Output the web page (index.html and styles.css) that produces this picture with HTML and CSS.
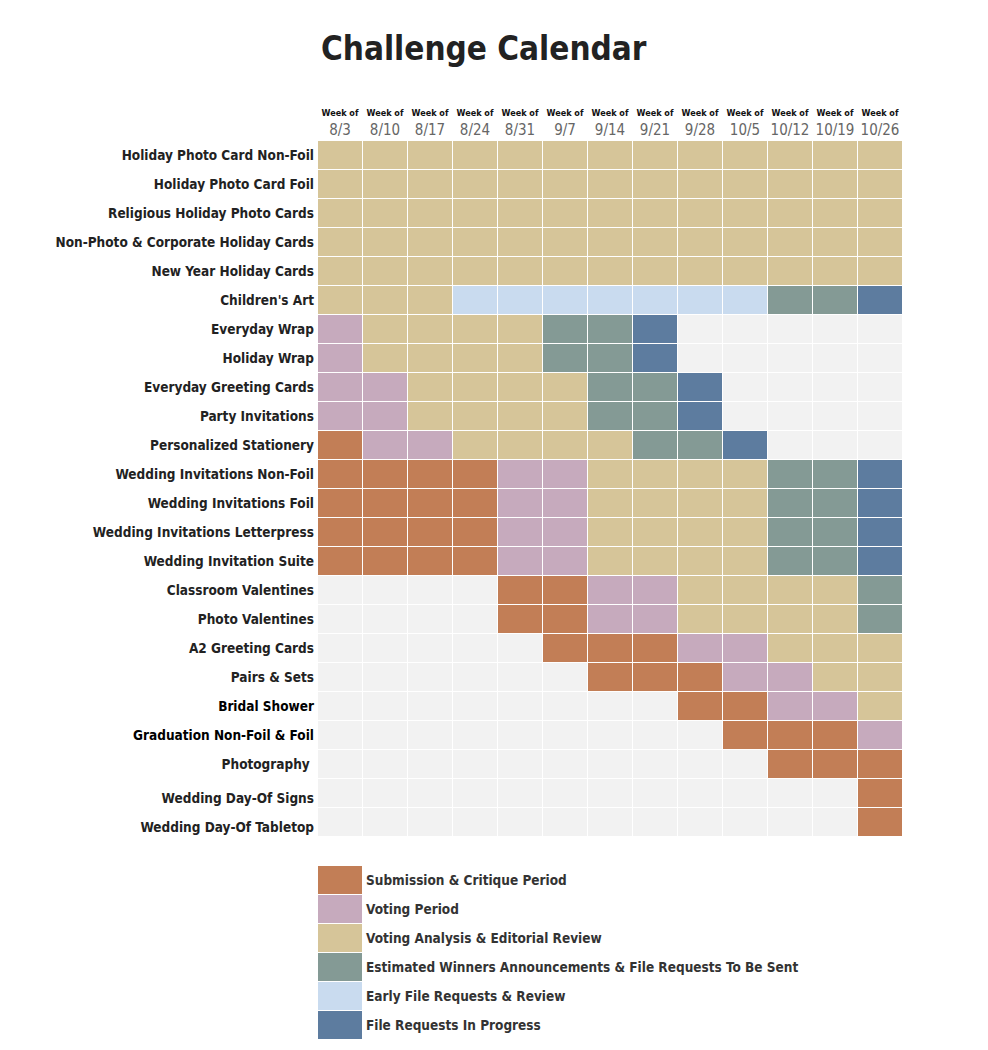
FILE: index.html
```html
<!DOCTYPE html>
<html lang="en">
<head>
<meta charset="utf-8">
<title>Challenge Calendar</title>
<link rel="stylesheet" href="styles.css">
</head>
<body>
<div class="page">
  <h1 class="title">Challenge Calendar</h1>
  <div class="cal" id="cal">
    <div class="corner"></div>
    <div class="wk"><span class="wk-of">Week of</span><span class="wk-date">8/3</span></div>
    <div class="wk"><span class="wk-of">Week of</span><span class="wk-date">8/10</span></div>
    <div class="wk"><span class="wk-of">Week of</span><span class="wk-date">8/17</span></div>
    <div class="wk"><span class="wk-of">Week of</span><span class="wk-date">8/24</span></div>
    <div class="wk"><span class="wk-of">Week of</span><span class="wk-date">8/31</span></div>
    <div class="wk"><span class="wk-of">Week of</span><span class="wk-date">9/7</span></div>
    <div class="wk"><span class="wk-of">Week of</span><span class="wk-date">9/14</span></div>
    <div class="wk"><span class="wk-of">Week of</span><span class="wk-date">9/21</span></div>
    <div class="wk"><span class="wk-of">Week of</span><span class="wk-date">9/28</span></div>
    <div class="wk"><span class="wk-of">Week of</span><span class="wk-date">10/5</span></div>
    <div class="wk"><span class="wk-of">Week of</span><span class="wk-date">10/12</span></div>
    <div class="wk"><span class="wk-of">Week of</span><span class="wk-date">10/19</span></div>
    <div class="wk"><span class="wk-of">Week of</span><span class="wk-date">10/26</span></div>
  </div>
  <div class="legend">
    <div class="lg-row"><span class="sw s"></span><span class="lg-text">Submission &amp; Critique Period</span></div>
    <div class="lg-row"><span class="sw v"></span><span class="lg-text">Voting Period</span></div>
    <div class="lg-row"><span class="sw a"></span><span class="lg-text">Voting Analysis &amp; Editorial Review</span></div>
    <div class="lg-row"><span class="sw w"></span><span class="lg-text">Estimated Winners Announcements &amp; File Requests To Be Sent</span></div>
    <div class="lg-row"><span class="sw e"></span><span class="lg-text">Early File Requests &amp; Review</span></div>
    <div class="lg-row"><span class="sw f"></span><span class="lg-text">File Requests In Progress</span></div>
  </div>
</div>
<script src="app.js"></script>
</body>
</html>
```

FILE: app.js
```js
(function () {
  var rows = [
    ["Holiday Photo Card Non-Foil", "aaaaaaaaaaaaa"],
    ["Holiday Photo Card Foil", "aaaaaaaaaaaaa"],
    ["Religious Holiday Photo Cards", "aaaaaaaaaaaaa"],
    ["Non-Photo & Corporate Holiday Cards", "aaaaaaaaaaaaa"],
    ["New Year Holiday Cards", "aaaaaaaaaaaaa"],
    ["Children's Art", "aaaeeeeeeewwf"],
    ["Everyday Wrap", "vaaaawwfxxxxx"],
    ["Holiday Wrap", "vaaaawwfxxxxx"],
    ["Everyday Greeting Cards", "vvaaaawwfxxxx"],
    ["Party Invitations", "vvaaaawwfxxxx"],
    ["Personalized Stationery", "svvaaaawwfxxx"],
    ["Wedding Invitations Non-Foil", "ssssvvaaaawwf"],
    ["Wedding Invitations Foil", "ssssvvaaaawwf"],
    ["Wedding Invitations Letterpress", "ssssvvaaaawwf"],
    ["Wedding Invitation Suite", "ssssvvaaaawwf"],
    ["Classroom Valentines", "xxxxssvvaaaaw"],
    ["Photo Valentines", "xxxxssvvaaaaw"],
    ["A2 Greeting Cards", "xxxxxsssvvaaa"],
    ["Pairs & Sets", "xxxxxxsssvvaa"],
    ["Bridal Shower", "xxxxxxxxssvva", "dark"],
    ["Graduation Non-Foil & Foil", "xxxxxxxxxsssv", "dark"],
    ["Photography\u00a0", "xxxxxxxxxxsss"],
    ["Wedding Day-Of Signs", "xxxxxxxxxxxxs", "low"],
    ["Wedding Day-Of Tabletop", "xxxxxxxxxxxxs", "low"]
  ];
  var cal = document.getElementById("cal");
  var frag = document.createDocumentFragment();
  rows.forEach(function (r) {
    var lab = document.createElement("div");
    lab.className = "label" + (r[2] ? " " + r[2] : "");
    lab.textContent = r[0];
    frag.appendChild(lab);
    for (var i = 0; i < r[1].length; i++) {
      var c = document.createElement("div");
      c.className = "cell " + r[1][i];
      frag.appendChild(c);
    }
  });
  cal.appendChild(frag);
})();
```

FILE: styles.css
```css
html, body {
  margin: 0;
  padding: 0;
  background: #ffffff;
}

body {
  font-family: "DejaVu Sans Condensed", "DejaVu Sans", sans-serif;
  font-stretch: condensed;
  color: #222222;
}

.page {
  width: 988px;
  padding-top: 29px;
  padding-bottom: 10px;
}

.title {
  margin: 0 0 0 321px;
  font-size: 33px;
  line-height: 40px;
  font-weight: bold;
  color: #222222;
}

.cal {
  margin-top: 37px;
  display: grid;
  grid-template-columns: 317px repeat(13, 44px);
  grid-auto-rows: 28px;
  grid-template-rows: 34px;
  column-gap: 1px;
  row-gap: 1px;
}

.wk {
  display: flex;
  flex-direction: column;
  align-items: center;
  justify-content: flex-end;
  gap: 2px;
}

.wk-of {
  font-size: 9px;
  line-height: 12px;
  font-weight: bold;
  color: #111111;
  white-space: nowrap;
}

.wk-date {
  font-size: 15px;
  line-height: 19px;
  color: #666666;
  white-space: nowrap;
}

.label {
  padding-right: 3px;
  text-align: right;
  font-size: 13.5px;
  line-height: 28px;
  font-weight: bold;
  color: #222222;
  white-space: nowrap;
}

.label.dark {
  color: #000000;
}

.label.low {
  box-sizing: border-box;
  height: 28px;
  padding-top: 11px;
  line-height: 16px;
}

.s { background: #c27e56; }
.v { background: #c6aabd; }
.a { background: #d6c599; }
.w { background: #849a95; }
.e { background: #c9dbef; }
.f { background: #5d7c9f; }
.x { background: #f2f2f2; }

.legend {
  margin: 30px 0 0 318px;
  display: flex;
  flex-direction: column;
  gap: 1px;
}

.lg-row {
  display: flex;
  align-items: center;
  gap: 4px;
}

.sw {
  width: 44px;
  height: 28px;
  flex: none;
}

.lg-text {
  font-size: 13.5px;
  font-weight: bold;
  color: #333333;
  white-space: nowrap;
}
```
